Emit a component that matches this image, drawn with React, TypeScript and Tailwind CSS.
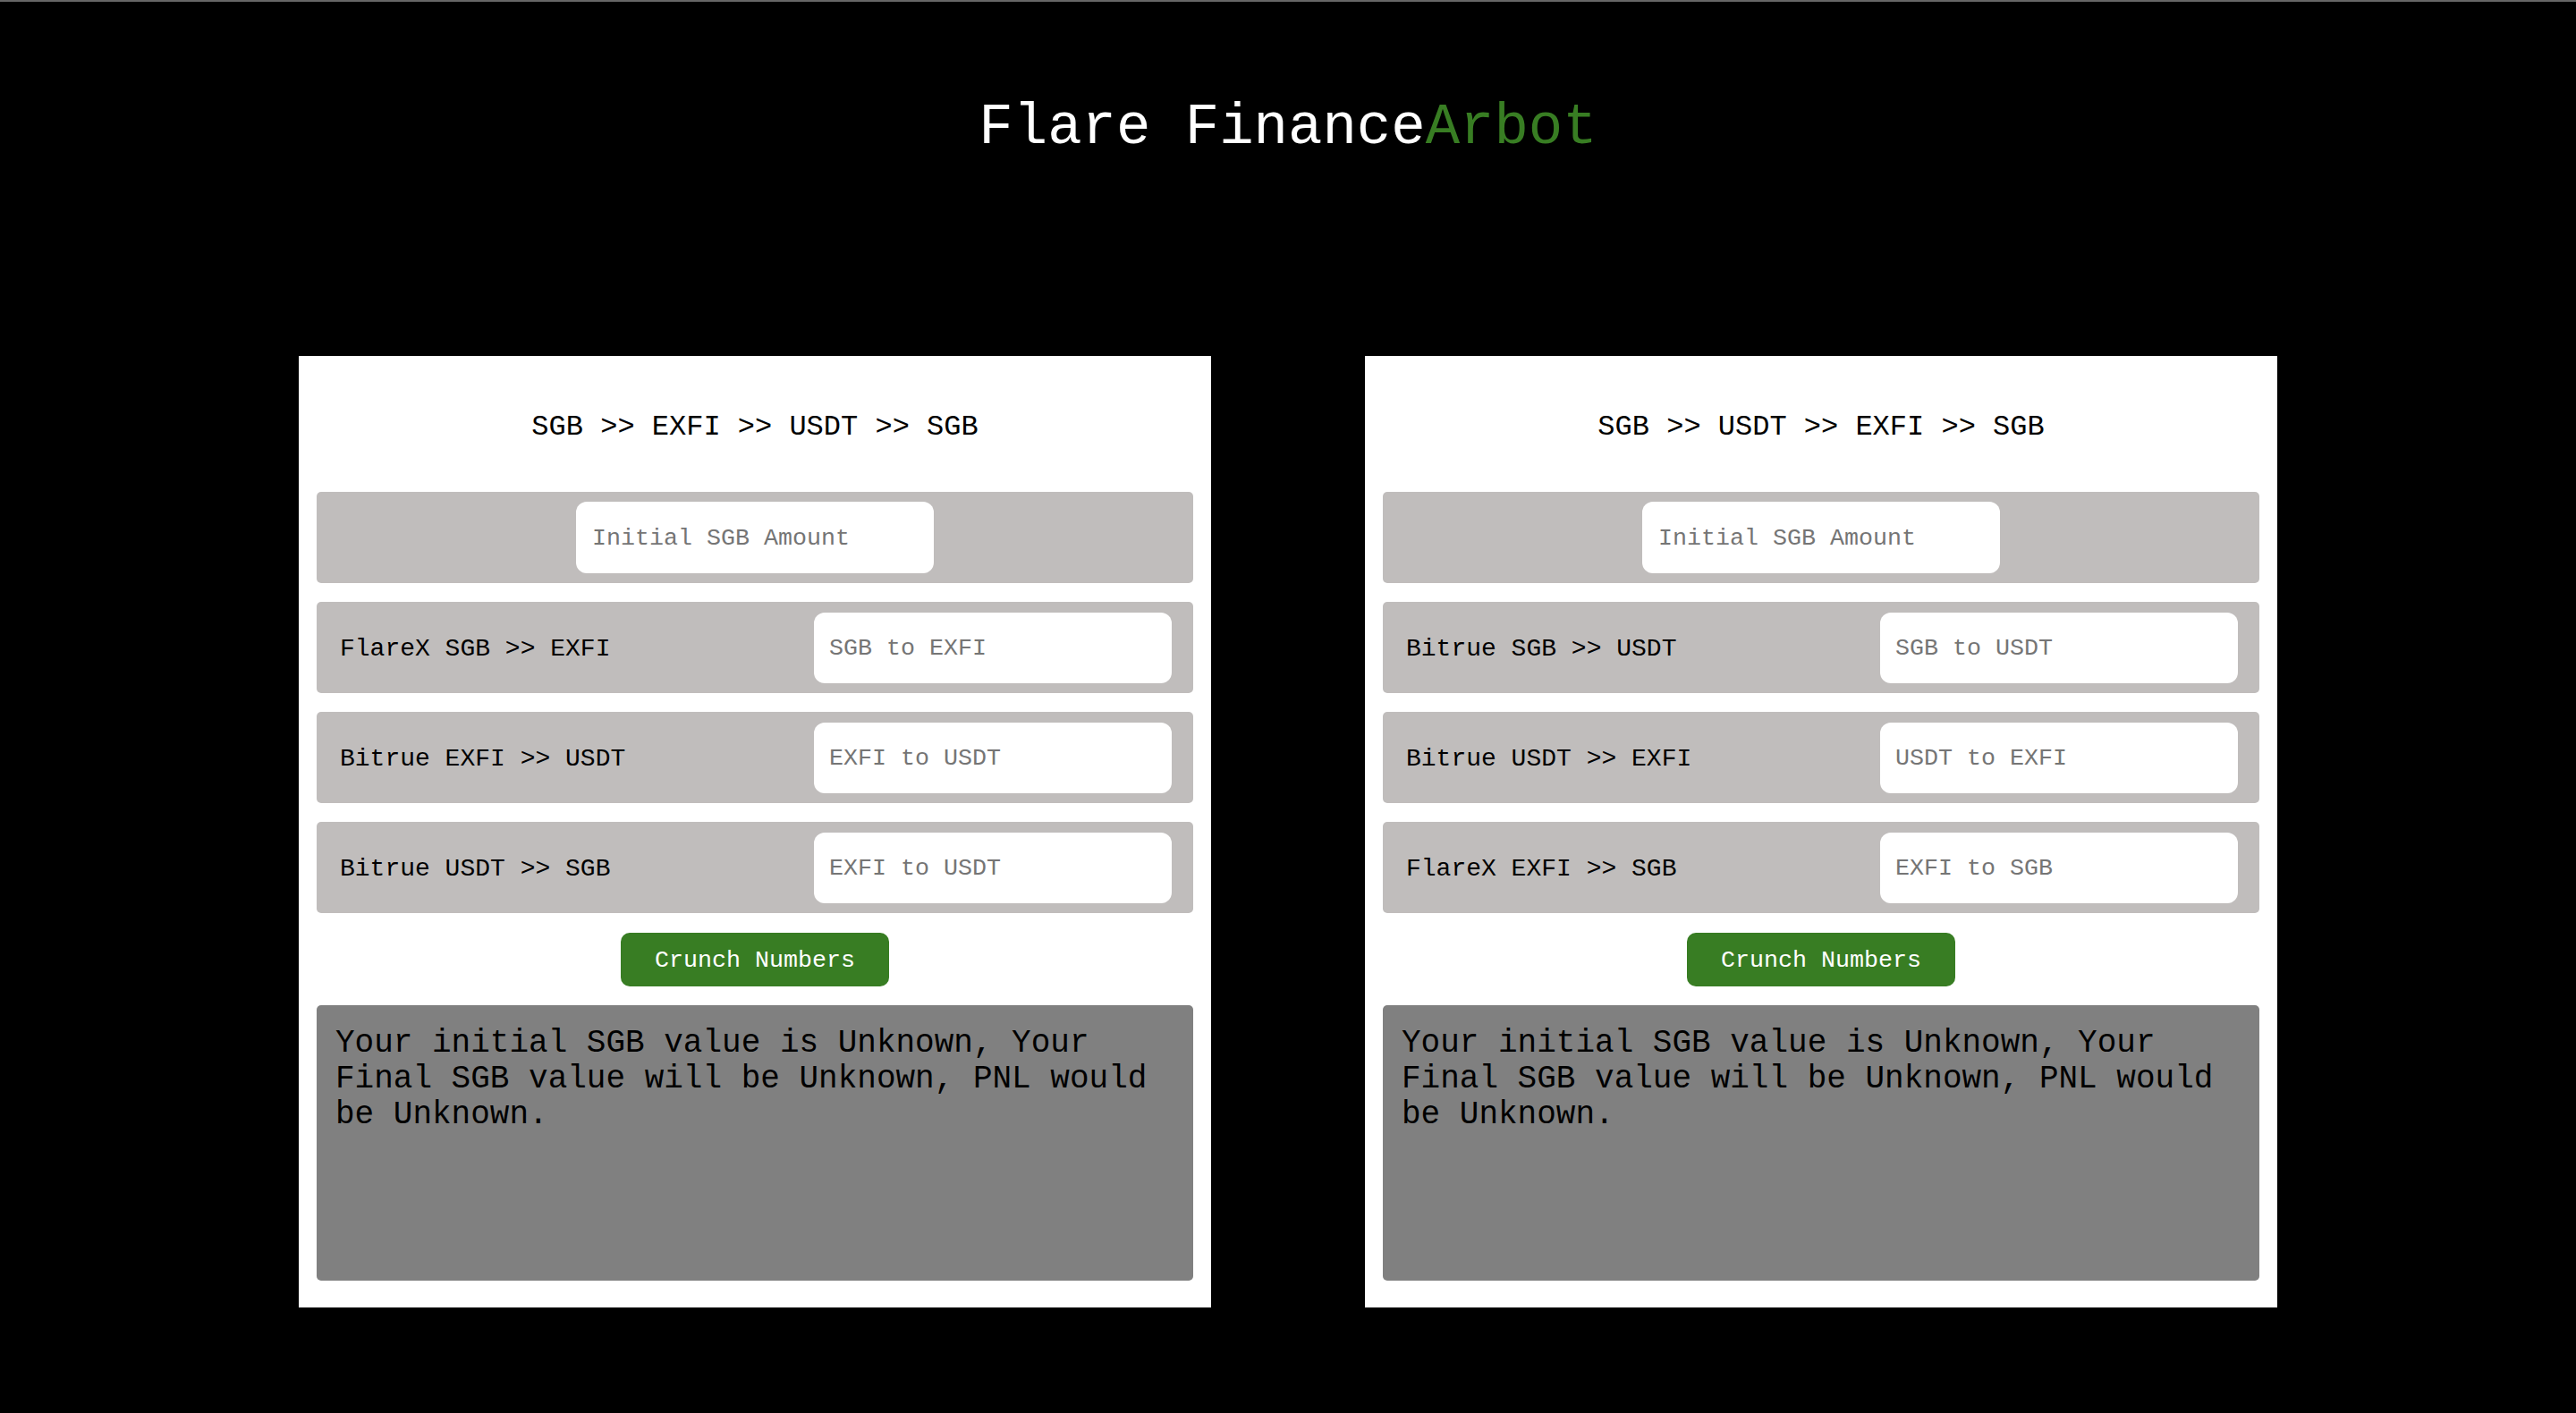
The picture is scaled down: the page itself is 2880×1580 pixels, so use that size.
import React from "react";

interface Step {
  label: string;
  placeholder: string;
}

interface Route {
  title: string;
  steps: Step[];
}

const routes: Route[] = [
  {
    title: "SGB >> EXFI >> USDT >> SGB",
    steps: [
      { label: "FlareX SGB >> EXFI", placeholder: "SGB to EXFI" },
      { label: "Bitrue EXFI >> USDT", placeholder: "EXFI to USDT" },
      { label: "Bitrue USDT >> SGB", placeholder: "EXFI to USDT" },
    ],
  },
  {
    title: "SGB >> USDT >> EXFI >> SGB",
    steps: [
      { label: "Bitrue SGB >> USDT", placeholder: "SGB to USDT" },
      { label: "Bitrue USDT >> EXFI", placeholder: "USDT to EXFI" },
      { label: "FlareX EXFI >> SGB", placeholder: "EXFI to SGB" },
    ],
  },
];

function RouteCard({ route }: { route: Route }) {
  return (
    <div className="w-[1020px] bg-white px-[20px] pt-[62px] pb-[30px]">
      <h2 className="text-center text-[32px] leading-[36px] text-black">{route.title}</h2>

      <div className="mt-[54px] flex flex-col gap-[21px]">
        {/* starting amount */}
        <div className="flex h-[102px] items-center justify-center rounded-[5px] bg-[#c0bdbc]">
          <input
            type="text"
            placeholder="Initial SGB Amount"
            className="h-[80px] w-[400px] rounded-[12px] bg-white px-[18px] pt-[2px] text-[26.67px] text-black outline-none placeholder:text-[#757575]"
          />
        </div>

        {route.steps.map((step) => (
          <div
            key={step.label}
            className="flex h-[102px] items-center justify-between rounded-[5px] bg-[#c0bdbc] pl-[26px] pr-[24px]"
          >
            <span className="pt-[3px] text-[28px] text-black">{step.label}</span>
            <input
              type="text"
              placeholder={step.placeholder}
              className="h-[79px] w-[400px] rounded-[12px] bg-white px-[17px] pt-[2px] text-[26.67px] text-black outline-none placeholder:text-[#757575]"
            />
          </div>
        ))}
      </div>

      <div className="mt-[22px] flex justify-center">
        <button className="h-[60px] w-[300px] rounded-[10px] bg-[#387d23] pt-[2px] text-[26.67px] text-white">
          Crunch Numbers
        </button>
      </div>

      <div className="mt-[21px] h-[308px] rounded-[5px] bg-[#808080] px-[21px] pt-[23px] text-[36px] leading-[40px] text-black">
        Your initial SGB value is Unknown, Your Final SGB value will be Unknown, PNL would be Unknown.
      </div>
    </div>
  );
}

export default function App() {
  return (
    <div className="min-h-[1580px] border-t-2 border-[#666666] bg-black font-['Liberation_Mono',monospace]">
      <h1 className="pt-[105px] text-center text-[64px] leading-[72px] text-white">
        Flare Finance<span className="text-[#387d23]">Arbot</span>
      </h1>

      <div className="mt-[219px] flex justify-center gap-[172px]">
        {routes.map((route) => (
          <RouteCard key={route.title} route={route} />
        ))}
      </div>
    </div>
  );
}
